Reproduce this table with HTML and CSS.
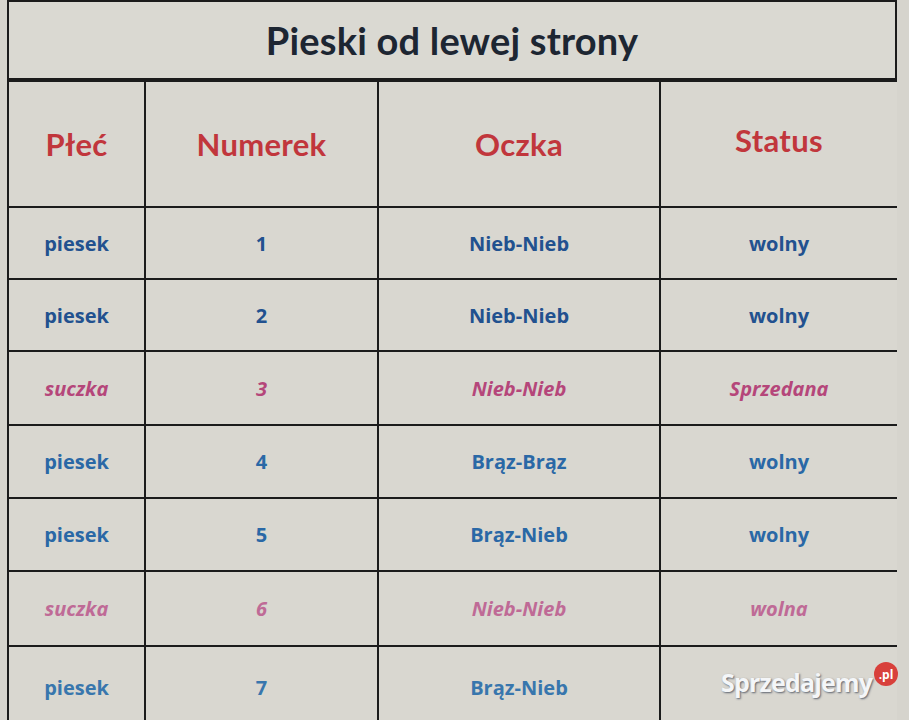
FILE: index.html
```html
<!DOCTYPE html>
<html lang="pl">
<head>
<meta charset="utf-8">
<title>Pieski od lewej strony</title>
<link rel="stylesheet" href="styles.css">
</head>
<body>
<div class="page">
  <div class="sheet">
    <div class="title">Pieski od lewej strony</div>
    <div class="grid">
      <div class="cell head">Płeć</div>
      <div class="cell head">Numerek</div>
      <div class="cell head">Oczka</div>
      <div class="cell head status">Status</div>

      <div class="cell b1">piesek</div>
      <div class="cell b1">1</div>
      <div class="cell b1">Nieb-Nieb</div>
      <div class="cell b1">wolny</div>

      <div class="cell b1">piesek</div>
      <div class="cell b1">2</div>
      <div class="cell b1">Nieb-Nieb</div>
      <div class="cell b1">wolny</div>

      <div class="cell pk">suczka</div>
      <div class="cell pk">3</div>
      <div class="cell pk">Nieb-Nieb</div>
      <div class="cell pk">Sprzedana</div>

      <div class="cell b2">piesek</div>
      <div class="cell b2">4</div>
      <div class="cell b2">Brąz-Brąz</div>
      <div class="cell b2">wolny</div>

      <div class="cell b2">piesek</div>
      <div class="cell b2">5</div>
      <div class="cell b2">Brąz-Nieb</div>
      <div class="cell b2">wolny</div>

      <div class="cell pk2">suczka</div>
      <div class="cell pk2">6</div>
      <div class="cell pk2">Nieb-Nieb</div>
      <div class="cell pk2">wolna</div>

      <div class="cell b3">piesek</div>
      <div class="cell b3">7</div>
      <div class="cell b3">Brąz-Nieb</div>
      <div class="cell b3"></div>
    </div>
  </div>
  <div class="watermark">Sprzedajemy<span class="pl">.pl</span></div>
</div>
</body>
</html>
```
FILE: styles.css
```css
html, body {
  margin: 0;
  padding: 0;
  background: #d6d4cd;
}
.page {
  position: relative;
  width: 909px;
  height: 720px;
  overflow: hidden;
  background: #d6d4cd;
  font-family: Lato, "Open Sans", sans-serif;
}
.sheet {
  margin-left: 7px;
  width: 890px;
  background: #1b1b1b;
  padding: 2px 2px 0 2px;
  box-sizing: border-box;
}
.title {
  height: 76px;
  background: #dad9d2;
  display: flex;
  align-items: center;
  justify-content: center;
  font-size: 38px;
  font-weight: 700;
  color: #1d2632;
  letter-spacing: 0.2px;
  margin-bottom: 4px;
}
.grid {
  display: grid;
  grid-template-columns: 135px 231px 280px 236px;
  grid-template-rows: 124px 70px 70px 72px 71px 71px 73px 80px;
  gap: 2px;
}
.cell {
  background: #d9d7d0;
  display: flex;
  align-items: center;
  justify-content: center;
  font-family: "Open Sans", Lato, sans-serif;
  font-weight: 700;
  font-size: 20px;
}
.head {
  font-family: Lato, "Open Sans", sans-serif;
  font-size: 31px;
  color: #c1363c;
  letter-spacing: 0.3px;
}
.head.status { padding-bottom: 8px; }
.b1 { color: #22518f; }
.b2 { color: #2a68a6; }
.b3 { color: #3876ad; }
.pk { color: #b5467a; font-style: italic; }
.pk2 { color: #bf6a96; font-style: italic; }
.watermark {
  position: absolute;
  left: 721px;
  top: 665px;
  font-family: "Open Sans", Lato, sans-serif;
  font-weight: 700;
  font-size: 25px;
  letter-spacing: -0.8px;
  color: #f4f6f8;
  text-shadow: 1px 1px 2px rgba(40, 50, 70, 0.7);
}
.pl {
  position: absolute;
  left: 153px;
  top: -3px;
  width: 24px;
  height: 24px;
  border-radius: 50%;
  background: #d8403b;
  color: #fff;
  font-size: 12px;
  letter-spacing: 0;
  text-shadow: none;
  display: flex;
  align-items: center;
  justify-content: center;
}
```
